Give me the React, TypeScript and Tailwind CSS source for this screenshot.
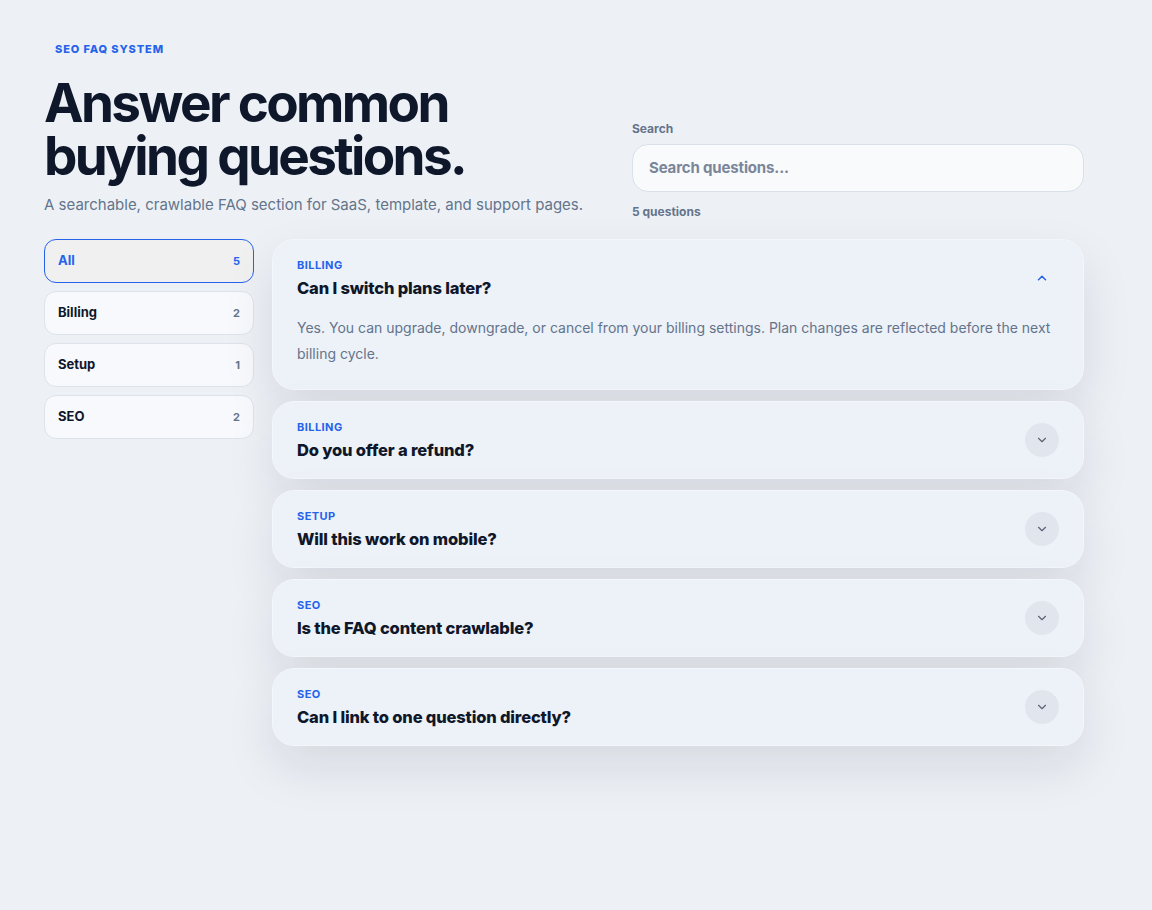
import React, { useState } from "react";

const faqs = [
  { cat: "BILLING", q: "Can I switch plans later?", a: "Yes. You can upgrade, downgrade, or cancel from your billing settings. Plan changes are reflected before the next billing cycle." },
  { cat: "BILLING", q: "Do you offer a refund?", a: "Yes. Refunds are available within 14 days of purchase." },
  { cat: "SETUP", q: "Will this work on mobile?", a: "Yes. The layout is fully responsive." },
  { cat: "SEO", q: "Is the FAQ content crawlable?", a: "Yes. All answers are rendered in the HTML." },
  { cat: "SEO", q: "Can I link to one question directly?", a: "Yes. Every question has its own anchor." },
];

const cats = [
  { name: "All", count: 5 },
  { name: "Billing", count: 2 },
  { name: "Setup", count: 1 },
  { name: "SEO", count: 2 },
];

function Chevron({ up }: { up?: boolean }) {
  return (
    <svg width="14" height="14" viewBox="0 0 24 24" fill="none" stroke="currentColor" strokeWidth={up ? 2.5 : 2} strokeLinecap="round" strokeLinejoin="round">
      {up ? <path d="M6 15l6-6 6 6" /> : <path d="M6 9l6 6 6-6" />}
    </svg>
  );
}

export default function App() {
  const [open, setOpen] = useState(0);
  return (
    <div className="min-h-[910px] w-full bg-[#edf1f6]" style={{ fontFamily: "Inter, 'Noto Sans', sans-serif" }}>
      <div className="w-[1040px] ml-[44px] pt-[35px]">
        <div className="flex items-end justify-between">
          <div>
            <div className="inline-block px-[11px] text-[11px] font-extrabold tracking-[0.08em] text-[#2563eb] leading-[14px]">SEO FAQ SYSTEM</div>
            <h1 className="mt-[18px] text-[53px] font-bold leading-[53px] tracking-[-0.05em] text-[#0f172a]">
              Answer common<br />buying questions.
            </h1>
            <p className="mt-[11px] text-[15px] leading-[22px] text-[#64748b]">A searchable, crawlable FAQ section for SaaS, template, and support pages.</p>
          </div>
          <div className="w-[452px] mb-[-4px]">
            <div className="text-[12px] font-bold text-[#64748b] leading-[16px]">Search</div>
            <div className="mt-[7px] h-[48px] rounded-[16px] border border-[#d9e0ea] bg-[#f8fafc] flex items-center px-[16px]">
              <span className="text-[15px] font-bold tracking-[-0.01em] text-[#7a8699]">Search questions...</span>
            </div>
            <div className="mt-[12px] text-[12px] font-bold text-[#64748b] leading-[16px]">5 questions</div>
          </div>
        </div>

        <div className="mt-[23px] flex gap-[18px] items-start">
          <div className="w-[210px] flex flex-col gap-[8px]">
            {cats.map((c, i) => (
              <div
                key={c.name}
                className={
                  i === 0
                    ? "h-[44px] rounded-[12px] border border-[#2563eb] bg-[#f0f0f1] flex items-center justify-between px-[13px]"
                    : "h-[44px] rounded-[12px] border border-[#dde3ec] bg-[#f7f9fc] flex items-center justify-between px-[13px]"
                }
              >
                <span className={i === 0 ? "text-[13px] font-bold text-[#2563eb]" : "text-[13px] font-bold text-[#0f172a]"}>{c.name}</span>
                <span className={i === 0 ? "text-[11px] font-bold text-[#2563eb]" : "text-[11px] font-bold text-[#64748b]"}>{c.count}</span>
              </div>
            ))}
          </div>

          <div className="w-[812px] flex flex-col gap-[11px]">
            {faqs.map((f, i) => {
              const isOpen = open === i;
              return (
                <div
                  key={f.q}
                  className="rounded-[22px] border border-[#f3f6fb] bg-[#edf1f8] shadow-[0_22px_50px_rgba(15,23,42,0.10)]"
                >
                  <button
                    onClick={() => setOpen(isOpen ? -1 : i)}
                    className="w-full flex items-center justify-between pl-[24px] pr-[24px] pt-[17px] pb-[17px] text-left"
                  >
                    <div>
                      <div className="text-[11px] font-bold tracking-[0.04em] text-[#2563eb] leading-[16px]">{f.cat}</div>
                      <div className="mt-[4px] text-[16.5px] font-extrabold tracking-[-0.01em] text-[#0f172a] leading-[22px]">{f.q}</div>
                    </div>
                    <div
                      className={
                        isOpen
                          ? "w-[34px] h-[34px] rounded-full flex items-center justify-center text-[#2563eb]"
                          : "w-[34px] h-[34px] rounded-full bg-[#e1e6ee] flex items-center justify-center text-[#5b6474]"
                      }
                    >
                      <Chevron up={isOpen} />
                    </div>
                  </button>
                  {isOpen && (
                    <p className="px-[24px] pb-[22px] -mt-[1px] text-[14px] leading-[26px] text-[#64748b]">{f.a}</p>
                  )}
                </div>
              );
            })}
          </div>
        </div>
      </div>
    </div>
  );
}
